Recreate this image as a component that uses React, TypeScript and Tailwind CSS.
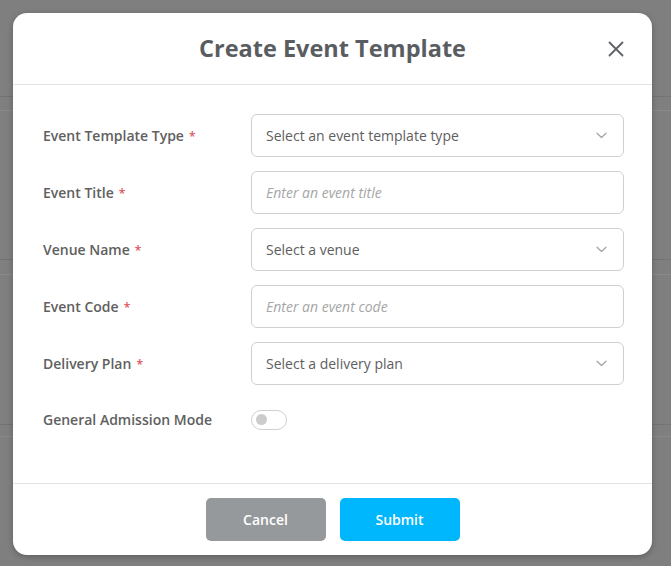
import React from "react";

const font = { fontFamily: '"Open Sans", "Noto Sans", sans-serif' };

function Chevron() {
  return (
    <svg width="11" height="7" viewBox="0 0 11 7" fill="none" className="shrink-0">
      <path d="M1 1.2 L5.5 5.5 L10 1.2" stroke="#a3a3a3" strokeWidth="1.2" strokeLinecap="round" strokeLinejoin="round" />
    </svg>
  );
}

function Label({ text, req = true }: { text: string; req?: boolean }) {
  return (
    <div className="w-[208px] shrink-0 text-[14px] font-semibold text-[#606060]">
      {text}
      {req && <span className="ml-[5px] text-[12px] text-[#e0525b]">*</span>}
    </div>
  );
}

function SelectBox({ text }: { text: string }) {
  return (
    <div className="flex h-[43px] flex-1 items-center justify-between rounded-[6px] border border-[#cfcfcf] bg-white pl-[14px] pr-[16px]">
      <span className="text-[14px] text-[#5e5e5e]">{text}</span>
      <Chevron />
    </div>
  );
}

function InputBox({ placeholder }: { placeholder: string }) {
  return (
    <div className="flex h-[43px] flex-1 items-center rounded-[6px] border border-[#cfcfcf] bg-white pl-[14px]">
      <span className="text-[14px] italic text-[#a6a6a6]">{placeholder}</span>
    </div>
  );
}

export default function App() {
  return (
    <div style={font} className="relative h-[566px] w-[671px] overflow-hidden bg-[#7f7f7f]">
      {/* underlying page hints */}
      <div className="flex flex-col">
        <div className="h-[97px] border-b border-[#737373]" />
        <div className="h-[14px] border-b border-[#8a8a8a]" />
        <div className="h-[149px] border-b border-[#737373]" />
        <div className="h-[15px] border-b border-[#8a8a8a]" />
        <div className="h-[150px] border-b border-[#737373]" />
        <div className="h-[12px] border-b border-[#8a8a8a]" />
      </div>

      <div className="absolute left-[13px] top-[13px] flex h-[542px] w-[639px] flex-col rounded-[14px] bg-white shadow-[0_2px_6px_rgba(0,0,0,0.25)]">
        <div className="relative flex h-[72px] shrink-0 items-center justify-center border-b border-[#e3e3e3]">
          <h1 className="text-[23.5px] font-bold text-[#595d61]">Create Event Template</h1>
          <svg className="absolute right-[28px] top-[28px]" width="16" height="16" viewBox="0 0 16 16" fill="none">
            <path d="M1.5 1.5 L14.5 14.5 M14.5 1.5 L1.5 14.5" stroke="#5f6266" strokeWidth="1.8" strokeLinecap="round" />
          </svg>
        </div>

        <div className="flex flex-1 flex-col gap-[14px] pl-[30px] pr-[28px] pt-[29px]">
          <div className="flex items-center">
            <Label text="Event Template Type" />
            <SelectBox text="Select an event template type" />
          </div>
          <div className="flex items-center">
            <Label text="Event Title" />
            <InputBox placeholder="Enter an event title" />
          </div>
          <div className="flex items-center">
            <Label text="Venue Name" />
            <SelectBox text="Select a venue" />
          </div>
          <div className="flex items-center">
            <Label text="Event Code" />
            <InputBox placeholder="Enter an event code" />
          </div>
          <div className="flex items-center">
            <Label text="Delivery Plan" />
            <SelectBox text="Select a delivery plan" />
          </div>
          <div className="flex h-[41px] items-center">
            <Label text="General Admission Mode" req={false} />
            <div className="flex h-[20px] w-[36px] items-center rounded-full border border-[#d0d0d0] bg-white pl-[4px]">
              <div className="h-[11px] w-[11px] rounded-full bg-[#cccccc]" />
            </div>
          </div>
        </div>

        <div className="flex h-[72px] shrink-0 items-center justify-center gap-[14px] border-t border-[#e3e3e3]">
          <button className="h-[43px] w-[120px] rounded-[5px] bg-[#95999b] text-[14px] font-semibold text-white">Cancel</button>
          <button className="h-[43px] w-[120px] rounded-[5px] bg-[#00b6fd] text-[14px] font-semibold text-white">Submit</button>
        </div>
      </div>
    </div>
  );
}
